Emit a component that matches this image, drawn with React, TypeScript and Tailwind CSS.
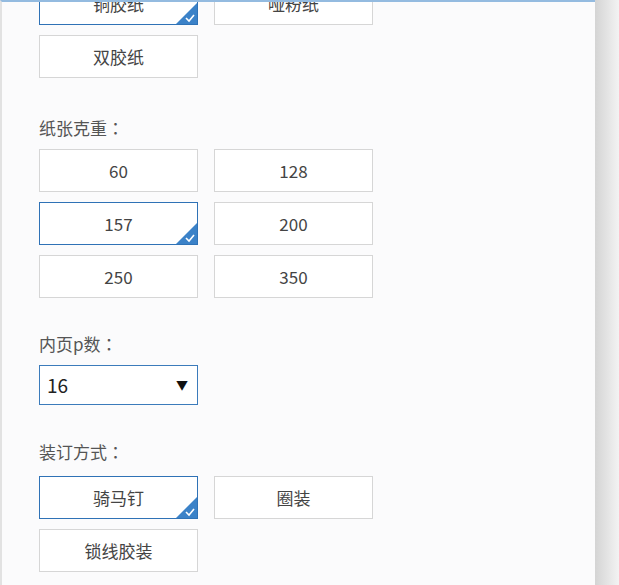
import React from "react";

type Opt = { label: string; selected?: boolean };

const font = { fontFamily: '"Noto Sans CJK SC", "Noto Sans", sans-serif' };

const Corner = () => (
  <svg
    className="absolute right-0 bottom-0"
    width="21"
    height="21"
    viewBox="0 0 21 21"
  >
    <polygon points="21,0 21,21 0,21" fill="#3b82c8" />
    <polyline
      points="10,15 13,18 18,12"
      fill="none"
      stroke="#ffffff"
      strokeWidth="1.6"
    />
  </svg>
);

const OptionButton = ({ label, selected }: Opt) => (
  <div
    className={`relative flex h-[43px] w-[159px] items-center justify-center bg-white text-[17px] text-[#444] ${
      selected ? "border border-[#2f72b6]" : "border border-[#d6d6d6]"
    }`}
  >
    {label}
    {selected && <Corner />}
  </div>
);

const OptionGrid = ({ options }: { options: Opt[] }) => (
  <div className="grid w-[334px] grid-cols-[159px_159px] gap-x-[16px] gap-y-[10px]">
    {options.map((o) => (
      <OptionButton key={o.label} label={o.label} selected={o.selected} />
    ))}
  </div>
);

// the colon sits centred in the reference, as in the TC glyph
const Label = ({ text }: { text: string }) => (
  <div className="text-[17px] leading-[24px] text-[#555]">
    {text}
    <span style={{ fontFamily: '"Noto Sans CJK TC", sans-serif' }}>：</span>
  </div>
);

export default function App() {
  return (
    <div className="flex h-[585px] w-[619px]" style={font}>
      <div className="h-full w-[595px] overflow-hidden border-t-2 border-l-2 border-t-[#94bbe0] border-l-[#e2e2e2] bg-[#fbfbfc]">
        <div className="mt-[-20px] pl-[37px]">
          <OptionGrid
            options={[
              { label: "铜胶纸", selected: true },
              { label: "哑粉纸" },
              { label: "双胶纸" },
            ]}
          />

          <div className="mt-[38px]">
            <Label text="纸张克重" />
          </div>
          <div className="mt-[9px]">
            <OptionGrid
              options={[
                { label: "60" },
                { label: "128" },
                { label: "157", selected: true },
                { label: "200" },
                { label: "250" },
                { label: "350" },
              ]}
            />
          </div>

          <div className="mt-[34px]">
            <Label text="内页p数" />
          </div>
          <div className="mt-[9px] flex h-[40px] w-[159px] items-center justify-between border border-[#3b7bbb] bg-white pr-[9px] pl-[7px] text-[19px] text-[#222]">
            <span>16</span>
            <span className="text-[12px] text-[#111]">▼</span>
          </div>

          <div className="mt-[35px]">
            <Label text="装订方式" />
          </div>
          <div className="mt-[12px]">
            <OptionGrid
              options={[
                { label: "骑马钉", selected: true },
                { label: "圈装" },
                { label: "锁线胶装" },
              ]}
            />
          </div>
        </div>
      </div>
      <div className="h-full w-[24px] bg-gradient-to-r from-[#d4d4d4] to-[#f3f3f3]" />
    </div>
  );
}
